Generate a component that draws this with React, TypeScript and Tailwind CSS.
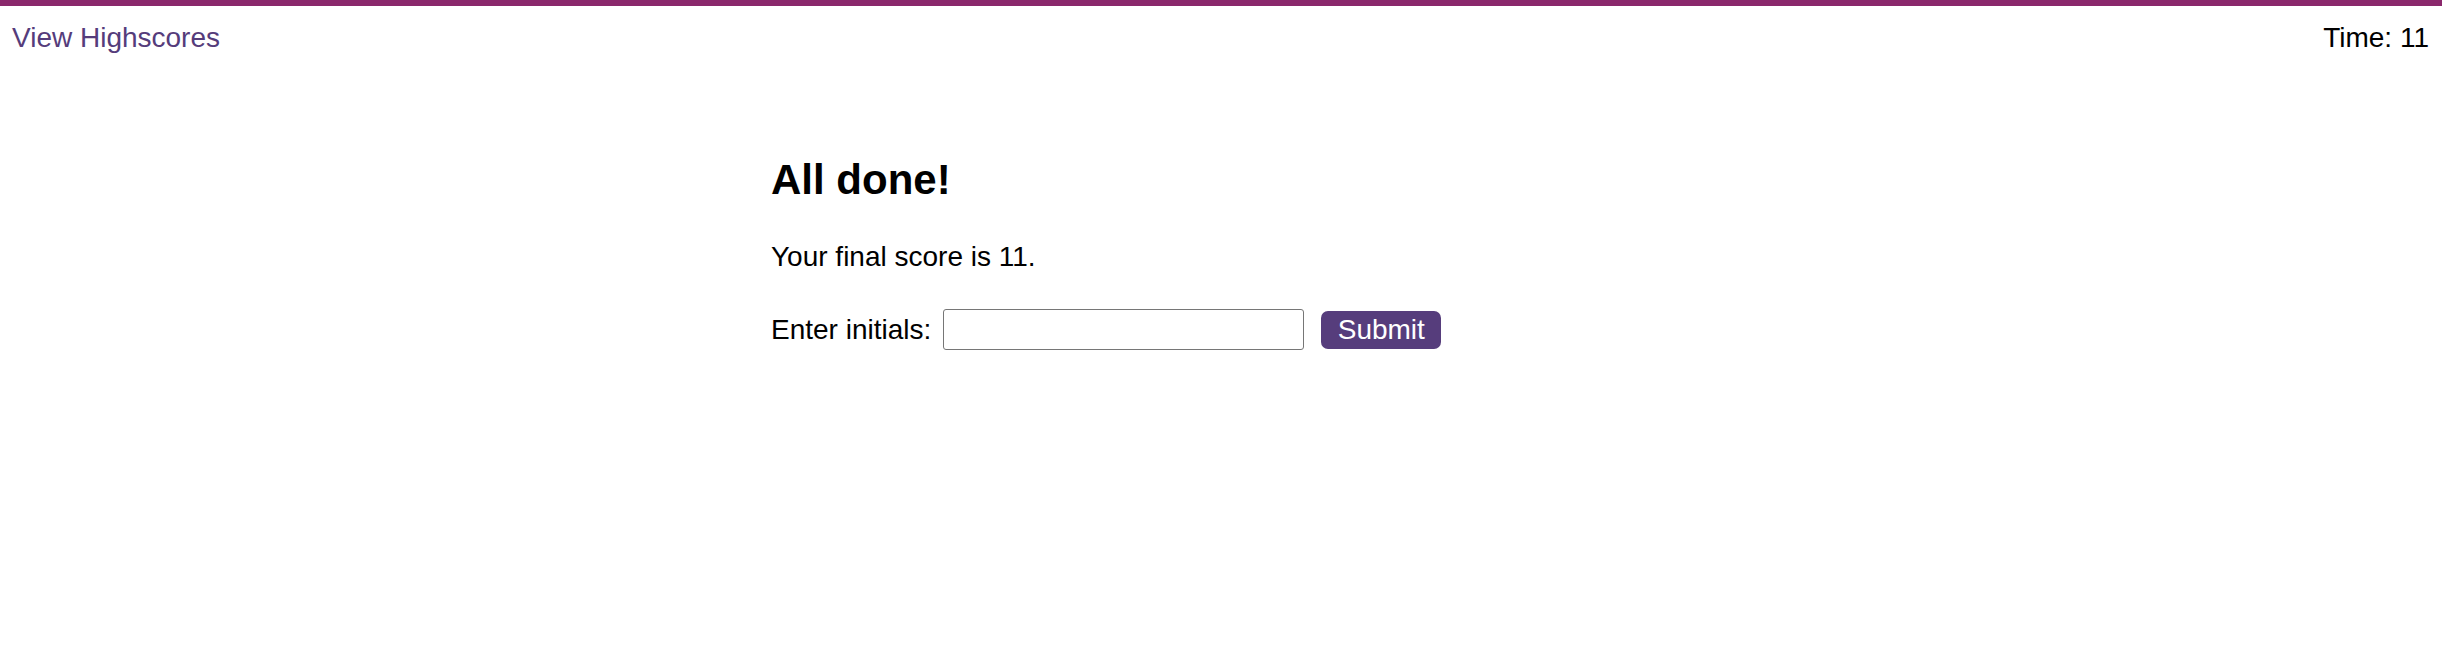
export default function App() {
  return (
    <div className="min-h-[664px] bg-white text-black" style={{ fontFamily: '"Liberation Sans", Arial, sans-serif' }}>
      <div className="h-[6px] bg-[#8a286c]" />
      <header className="flex justify-between pl-[12px] pr-[13px] pt-[16px] text-[28px] leading-[32px]">
        <a className="text-[#553c7b] cursor-pointer">View Highscores</a>
        <span>Time: 11</span>
      </header>
      <main className="mx-auto w-[900px] pt-[102px]">
        <h2 className="text-[42px] leading-[48px] font-bold">All done!</h2>
        <p className="mt-[37px] text-[28px] leading-[32px]">Your final score is 11.</p>
        <div className="mt-[36px] flex items-center text-[28px] leading-[32px]">
          <label>Enter initials:</label>
          <input
            type="text"
            className="ml-[12px] h-[41px] w-[361px] rounded-[3px] border border-[#767676] bg-white px-1 text-[23px] outline-none"
          />
          <button className="ml-[17px] h-[38px] w-[120px] rounded-[7px] bg-[#563d7c] text-[28px] leading-[32px] text-white">
            Submit
          </button>
        </div>
      </main>
    </div>
  );
}
